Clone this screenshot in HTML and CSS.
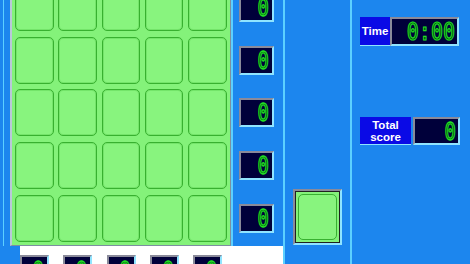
FILE: index.html
```html
<!DOCTYPE html>
<html>
<head>
<meta charset="utf-8">
<link rel="stylesheet" href="styles.css">
</head>
<body>
<div class="app">
  <div class="left">
    <div class="left-top">
      <div class="strip"></div>
      <div class="board">
        <div class="cell"></div><div class="cell"></div><div class="cell"></div><div class="cell"></div><div class="cell"></div>
        <div class="cell"></div><div class="cell"></div><div class="cell"></div><div class="cell"></div><div class="cell"></div>
        <div class="cell"></div><div class="cell"></div><div class="cell"></div><div class="cell"></div><div class="cell"></div>
        <div class="cell"></div><div class="cell"></div><div class="cell"></div><div class="cell"></div><div class="cell"></div>
        <div class="cell"></div><div class="cell"></div><div class="cell"></div><div class="cell"></div><div class="cell"></div>
      </div>
      <div class="rowscores">
        <div class="slot"><div class="lcd small"><span class="digit">0</span></div></div>
        <div class="slot"><div class="lcd small"><span class="digit">0</span></div></div>
        <div class="slot"><div class="lcd small"><span class="digit">0</span></div></div>
        <div class="slot"><div class="lcd small"><span class="digit">0</span></div></div>
        <div class="slot"><div class="lcd small"><span class="digit">0</span></div></div>
      </div>
    </div>
    <div class="left-bottom">
      <div class="colscores">
        <div class="lcd col"><span class="digit">0</span></div>
        <div class="lcd col"><span class="digit">0</span></div>
        <div class="lcd col"><span class="digit">0</span></div>
        <div class="lcd col"><span class="digit">0</span></div>
        <div class="lcd col"><span class="digit">0</span></div>
      </div>
    </div>
  </div>
  <div class="mid">
    <div class="next"><div class="next-cell"></div></div>
  </div>
  <div class="right">
    <div class="info time-row">
      <div class="label time-label">Time</div>
      <div class="lcd time-lcd"><span class="digit big">0:00</span></div>
    </div>
    <div class="info total-row">
      <div class="label total-label">Total<br>score</div>
      <div class="lcd total-lcd"><span class="digit">0</span></div>
    </div>
  </div>
</div>
</body>
</html>
```

FILE: styles.css
```css
html, body {
  margin: 0;
  padding: 0;
}
body {
  width: 470px;
  height: 264px;
  overflow: hidden;
  background: #1c86ee;
  font-family: "Liberation Sans", Arial, sans-serif;
}
.app {
  display: flex;
  height: 264px;
  overflow: hidden;
}
.left {
  width: 283px;
  display: flex;
  flex-direction: column;
  overflow: hidden;
}
.left-top {
  display: flex;
  height: 265px;
  margin-top: -19px;
  flex: none;
}
.strip {
  width: 10px;
  box-sizing: border-box;
  border-left: 3px solid #1c86ee;
  background: linear-gradient(to right, #5cd0ff 0, #5cd0ff 1px, #1c86ee 1px);
}
.board {
  box-sizing: border-box;
  width: 221px;
  height: 265px;
  border: 1px solid #7c8ea0;
  border-left: 2px solid #b8c8d8;
  padding: 2px 3px 2px 3px;
  background: #84f27a;
  display: grid;
  grid-template-columns: repeat(5, 38.5px);
  grid-template-rows: repeat(5, 47px);
  column-gap: 4.8px;
  row-gap: 5.7px;
}
.cell {
  box-sizing: border-box;
  border: 1.5px solid #38b030;
  border-radius: 5px;
  background: #88f47e;
  box-shadow: inset 0 0 0 1px #74e46a;
}
.rowscores {
  box-sizing: border-box;
  width: 52px;
  border-left: 2px solid #5cd0ff;
  padding-top: 3px;
  display: flex;
  flex-direction: column;
  row-gap: 5.7px;
}
.slot {
  height: 47px;
  display: flex;
  align-items: center;
  padding-left: 6px;
}
.lcd {
  box-sizing: border-box;
  background: #00003a;
  border-top: 2px solid #8a8a9a;
  border-left: 2px solid #8a8a9a;
  border-bottom: 2px solid #90e4ff;
  border-right: 2px solid #90e4ff;
  display: flex;
  align-items: center;
  justify-content: flex-end;
  overflow: hidden;
}
.lcd.small {
  width: 35px;
  height: 29px;
  padding-right: 3px;
}
.digit {
  font-family: "DejaVu Sans Mono", monospace;
  font-size: 19px;
  line-height: 1;
  color: #003a10;
  -webkit-text-stroke: 1px #22e022;
  transform: scaleY(1.3);
  display: inline-block;
}
.left-bottom {
  flex: 1;
  min-height: 0;
  padding-left: 20px;
  display: flex;
  overflow: hidden;
}
.colscores {
  flex: 1;
  background: #ffffff;
  display: flex;
  column-gap: 14.3px;
  padding-top: 9px;
  align-items: flex-start;
  overflow: hidden;
}
.lcd.col {
  flex: none;
  width: 29px;
  height: 26px;
  justify-content: flex-end;
  align-items: flex-start;
  padding-top: 4px;
  padding-right: 3px;
}
.mid {
  box-sizing: border-box;
  width: 69px;
  border-left: 2px solid #5cd0ff;
  border-right: 2px solid #5cd0ff;
  display: flex;
  flex-direction: column;
  justify-content: flex-end;
  padding-bottom: 19px;
  padding-left: 8px;
}
.next {
  box-sizing: border-box;
  width: 49px;
  height: 56px;
  border-top: 2px solid #8a8a9a;
  border-left: 2px solid #8a8a9a;
  border-bottom: 2px solid #90e4ff;
  border-right: 2px solid #90e4ff;
  background: #84f27a;
  box-shadow: inset 1px 1px 0 #202020, inset -1px -1px 0 #202020;
  padding: 3px;
  display: flex;
}
.next-cell {
  flex: 1;
  border: 1.5px solid #38b030;
  border-radius: 5px;
  background: #88f47e;
}
.right {
  flex: 1;
  padding-left: 8px;
  display: flex;
  flex-direction: column;
}
.info {
  display: flex;
  align-items: stretch;
}
.time-row {
  margin-top: 17px;
  height: 29px;
}
.total-row {
  margin-top: 71px;
  height: 28px;
}
.label {
  background: #0a0ae6;
  color: #ffffff;
  font-weight: bold;
  font-size: 11.5px;
  display: flex;
  align-items: center;
  justify-content: center;
  text-align: center;
  line-height: 12px;
  border-bottom: 1px solid #90e4ff;
}
.time-label {
  width: 30px;
}
.total-label {
  width: 51px;
}
.time-lcd {
  width: 69px;
  padding-right: 2px;
}
.total-lcd {
  width: 47px;
  margin-left: 2px;
  padding-right: 2px;
}
.digit.big {
  font-size: 20px;
  transform: scaleY(1.2);
}
```
